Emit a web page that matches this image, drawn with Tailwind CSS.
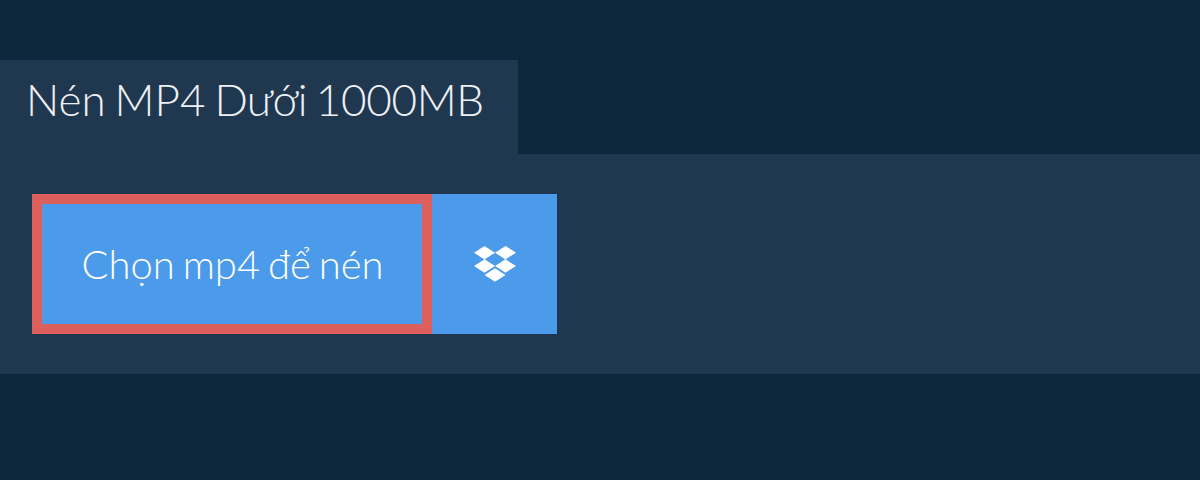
<!DOCTYPE html>
<html>
<head>
<meta charset="UTF-8" />
<script src="https://cdn.jsdelivr.net/npm/@tailwindcss/browser@4"></script>
<title>Nén MP4</title>
</head>
<body class="bg-[#0e263b] h-[480px] overflow-hidden font-['Lato',sans-serif] font-light">
    <div class="pt-[60px]">
        <h1 class="w-[518px] h-[94px] bg-[#203750] flex items-center pl-[26px] pb-[16px] text-[#eef1f4] text-[44px] font-light whitespace-nowrap [word-spacing:-3px]">
            <span>Nén MP4 <span class="tracking-[-0.8px]">Dưới</span> <span class="tracking-[-0.3px]">1000MB</span></span>
        </h1>
        <section class="bg-[#203750] h-[220px] p-10 pl-8 flex">
            <button class="w-[400px] h-[140px] bg-[#4c9aea] border-[10px] border-[#dc5f5c] text-white text-[40px] font-light flex items-center justify-center whitespace-nowrap [word-spacing:-3px] pl-[1px]">Chọn mp4 để nén</button>
            <div class="w-[125px] h-[140px] bg-[#4c9aea] flex items-center justify-center">
                <svg class="w-[42px] h-[36px] text-white" viewBox="0 0 42 36" fill="currentColor">
                    <path d="M10.5 0 0 6.7l10.5 6.7L21 6.7zM31.5 0 21 6.7l10.5 6.7L42 6.7zM0 20l10.5 6.7L21 20l-10.5-6.7zM31.5 13.3 21 20l10.5 6.7L42 20zM10.5 29 21 35.7 31.5 29 21 22.3z"/>
                </svg>
            </div>
        </section>
    </div>
</body>
</html>
